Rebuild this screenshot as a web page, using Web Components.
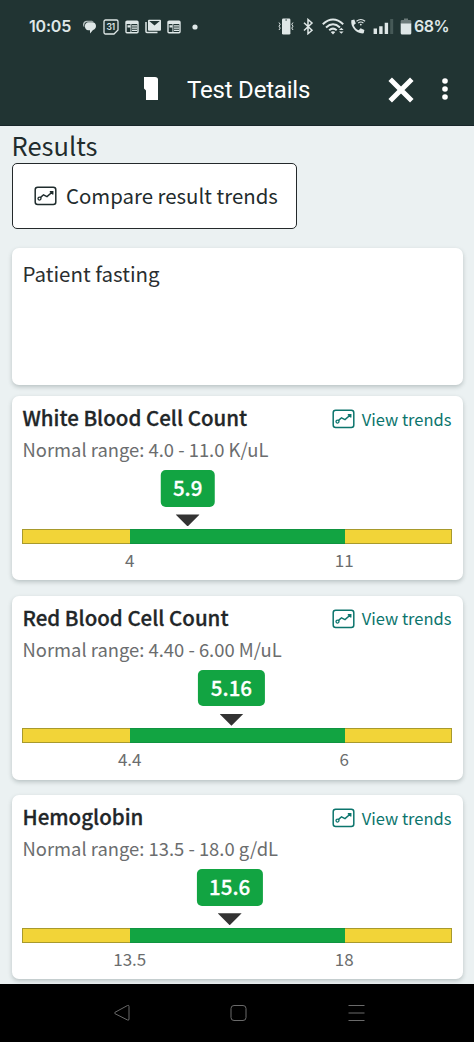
<!DOCTYPE html>
<html lang="en">
<head>
<meta charset="utf-8">
<title>Test Details</title>
<style>
    body {
        margin: 0;
        background-color: #ebf1f2;
        font-family: "Noto Sans CJK SC", "Noto Sans", sans-serif;
        color: #1f2c2d;
    }

    .screen {
        display: flex;
        flex-direction: column;
        height: 1042px;
        overflow: hidden;
    }
</style>
</head>
<body>
<div class="screen">
    <status-bar time="10:05" battery="68%"></status-bar>
    <app-toolbar>Test Details</app-toolbar>
    <results-page heading="Results">
        <compare-button slot="action">Compare result trends</compare-button>
        <note-card>Patient fasting</note-card>
        <result-card name="White Blood Cell Count" range="4.0 - 11.0 K/uL" value="5.9" low="4" high="11" at="38.5"></result-card>
        <result-card name="Red Blood Cell Count" range="4.40 - 6.00 M/uL" value="5.16" low="4.4" high="6" at="48.7"></result-card>
        <result-card name="Hemoglobin" range="13.5 - 18.0 g/dL" value="15.6" low="13.5" high="18" at="48.3"></result-card>
    </results-page>
    <nav-bar></nav-bar>
</div>

<script>
class StatusBar extends HTMLElement {

    constructor() {
        super();
        this.shadowDOM = this.attachShadow({mode: "open"});
    }

    connectedCallback() {
        this.render();
    }

    render() {
        const news = `
            <svg width="14" height="14" viewBox="0 0 14 14">
                <rect x="1" y="1.2" width="12" height="11.6" rx="1" fill="none" stroke="currentColor" stroke-width="1.4"/>
                <path d="M1 1.500h12v2.500H1z" fill="currentColor"/>
                <path d="M2.500 5.200h3v2.200h-3zM7 5.200h5v1.400H7zM7 7.500h5v1.300H7zM7 9.800h5v1.300H7z" fill="currentColor"/>
                <path d="M5.900 4v8.500" stroke="currentColor" stroke-width=".9"/>
            </svg>`;
        this.shadowDOM.innerHTML = `
            <style>
                :host {
                    display: flex;
                    flex: none;
                    align-items: center;
                    justify-content: space-between;
                    box-sizing: border-box;
                    height: 53px;
                    padding: 0 25px 0 29px;
                    background-color: #213433;
                    color: #dfe7e7;
                    font: 600 16px/20px Inter, sans-serif;
                }

                .side {
                    display: flex;
                    align-items: center;
                }

                svg {
                    display: block;
                }

                .time {
                    width: 54px;
                    margin-top: -2px;
                    letter-spacing: -0.2px;
                }

                .percent {
                    margin: -1px 0 0 2px;
                    width: 35px;
                    letter-spacing: -0.5px;
                }
            </style>
            <div class="side">
                <span class="time">${this.getAttribute("time")}</span>
                <svg width="13" height="14" viewBox="0 0 13 14">
                    <path d="M4 .8h4c1.200 0 2 .4 2.600 1H4.800C2.600 1.800 1.300 3.200 1.300 5.300v2C.5 6.600 0 5.600 0 4.500 0 2.300 1.700.8 4 .8z" fill="currentColor" opacity=".8"/>
                    <path d="M5.300 2.300h4C11.500 2.300 13 3.900 13 6c0 2-1.300 3.500-3 4L7 13.600V10.200H5.300C3.300 10.200 1.900 8.400 1.900 6.200S3.300 2.300 5.300 2.300z" fill="currentColor"/>
                </svg>
                <svg style="margin-left: 7px" width="16" height="16" viewBox="0 0 16 16">
                    <path d="M2.500 1h11A1.500 1.500 0 0 1 15 2.500V11l-4 4H2.500A1.500 1.500 0 0 1 1 13.500v-11A1.500 1.500 0 0 1 2.500 1z" fill="none" stroke="currentColor" stroke-width="1.300"/>
                    <text x="7.700" y="10.800" text-anchor="middle" font-family="Inter" font-size="8.500" font-weight="600" letter-spacing="-.2" fill="currentColor">31</text>
                </svg>
                <span style="margin-left: 6px">${news}</span>
                <svg style="margin-left: 6px" width="17" height="15" viewBox="0 0 17 15">
                    <path d="M1 3v9.500q0 1 1 1h10.500" fill="none" stroke="currentColor" stroke-width="1.500"/>
                    <path d="M4 .8h11q1 0 1 1v9q0 1-1 1H4q-1 0-1-1v-9q0-1 1-1z" fill="currentColor"/>
                    <path d="M4.200 2l5.300 4.600L14.800 2z" fill="#213433"/>
                </svg>
                <span style="margin-left: 5px">${news}</span>
                <svg style="margin-left: 11px" width="6" height="6" viewBox="0 0 6 6"><circle cx="3" cy="3" r="2.600" fill="currentColor"/></svg>
            </div>
            <div class="side">
                <svg width="16" height="17" viewBox="0 0 16 17">
                    <rect x="4" y=".5" width="8.400" height="16" rx="1.300" fill="currentColor"/>
                    <path d="M1 4.500l1.200 1.800L1 8.200l1.200 1.900L1 12M15 4.500l-1.200 1.800L15 8.200l-1.200 1.900L15 12" fill="none" stroke="currentColor" stroke-width="1"/>
                    <circle cx="8.100" cy="2" r=".7" fill="#213433"/>
                </svg>
                <svg style="margin-left: 9px" width="11" height="17" viewBox="0 0 11 17">
                    <path d="M1 4.700l8 7.500-4 3.500V1.500l4 3.500-8 7.500" fill="none" stroke="currentColor" stroke-width="1.500"/>
                </svg>
                <svg style="margin-left: 8px" width="23" height="17" viewBox="0 0 23 17">
                    <path d="M.8 6.200Q11 -3.300 21.200 6.200M4 9.400q7-6.300 14 0M7.200 12.300q3.800-3.300 7.500 0" fill="none" stroke="currentColor" stroke-width="2"/>
                    <path d="M8.700 14q2.300-1.500 4.600 0L11 16.500zM17 12l2.300-2.300 2.300 2.300zM17 13.500l2.300 2.300 2.300-2.300z" fill="currentColor"/>
                </svg>
                <svg style="margin-left: 5px" width="16" height="17" viewBox="0 0 16 17">
                    <path d="M1.300 2.300l3-.8 1.500 3.900-2 1.600c.8 2.600 2.400 4.300 4.900 5.300l1.900-2 3.800 1.700-.7 3.300c-6.800 1-13.300-5.800-12.400-13z" fill="currentColor"/>
                    <path d="M6.500 3.200q4.300-3.400 8.600 0M8.200 5q2.600-2 5.200 0" fill="none" stroke="currentColor" stroke-width="1.100"/>
                    <circle cx="10.800" cy="6.600" r=".9" fill="currentColor"/>
                </svg>
                <svg style="margin-left: 7px" width="21" height="17" viewBox="0 0 21 17">
                    <path d="M.6 10.500H4V16H.6zM6.200 8.300h3.400V16H6.200zM11.700 4.800h3.400V16h-3.400z" fill="currentColor"/>
                    <path d="M17.200 1h3v15h-3z" fill="#465957"/>
                </svg>
                <svg style="margin-left: 6px" width="12" height="17" viewBox="0 0 12 17">
                    <path d="M4 .5h4v1.400h2q1.300 0 1.300 1.300V6H.7V3.200Q.7 1.900 2 1.900h2z" fill="#6d7b7a"/>
                    <path d="M.7 5.500h10.600V15q0 1.500-1.500 1.500H2.200Q.7 16.500.7 15z" fill="currentColor"/>
                </svg>
                <span class="percent">${this.getAttribute("battery")}</span>
            </div>`;
    }
}

class AppToolbar extends HTMLElement {

    constructor() {
        super();
        this.shadowDOM = this.attachShadow({mode: "open"});
    }

    connectedCallback() {
        this.render();
    }

    render() {
        this.shadowDOM.innerHTML = `
            <style>
                :host {
                    display: flex;
                    flex: none;
                    align-items: center;
                    box-sizing: border-box;
                    height: 73px;
                    padding: 0 25px 0 143px;
                    background-color: #213433;
                    border-bottom: 1px solid #18262a;
                    color: #fff;
                }

                .title {
                    flex: 1;
                    margin-left: 28px;
                    font: 400 24px/30px Roboto, sans-serif;
                    letter-spacing: -0.2px;
                    padding-top: 2px;
                }

                svg {
                    flex: none;
                }
            </style>
            <svg width="16" height="24" viewBox="0 0 16 24"><path d="M1 0h11q3 0 3 2.500V23H3v-9.500l-2-2z" fill="#fff"/></svg>
            <div class="title"><slot></slot></div>
            <svg style="margin-top: 1px" width="26" height="26" viewBox="0 0 26 26"><path d="M2.200 2.200l21.600 21.600M23.800 2.200L2.200 23.800" stroke="#fff" stroke-width="5"/></svg>
            <svg style="margin-left: 27px" width="8" height="24" viewBox="0 0 8 24">
                <g fill="#fff"><circle cx="4" cy="4" r="2.800"/><circle cx="4" cy="12" r="2.800"/><circle cx="4" cy="20" r="2.800"/></g>
            </svg>`;
    }
}

class TrendIcon extends HTMLElement {

    constructor() {
        super();
        this.shadowDOM = this.attachShadow({mode: "open"});
    }

    connectedCallback() {
        this.shadowDOM.innerHTML = `
            <style>
                :host {
                    display: block;
                    flex: none;
                    width: 23px;
                    height: 20px;
                }

                svg {
                    display: block;
                }
            </style>
            <svg width="23" height="20" viewBox="0 0 23 20" fill="none" stroke="currentColor">
                <rect x="1.200" y="1.200" width="20.600" height="17.300" rx="2.500" stroke-width="1.500"/>
                <circle cx="5.500" cy="12.600" r="1.500" stroke-width="1.300"/>
                <path d="M6.600 11.400l2.900-2.600 3.500 1.800L18.300 6M15.800 5.700h2.900v2.900" stroke-width="1.500"/>
            </svg>`;
    }
}

class ResultsPage extends HTMLElement {

    constructor() {
        super();
        this.shadowDOM = this.attachShadow({mode: "open"});
    }

    connectedCallback() {
        this.shadowDOM.innerHTML = `
            <style>
                :host {
                    display: block;
                    flex: none;
                    box-sizing: border-box;
                    height: 858px;
                    padding: 0 11.500px;
                    overflow: hidden;
                    background-color: #ebf1f2;
                }

                h1 {
                    margin: 0;
                    height: 37px;
                    font-size: 25.500px;
                    font-weight: 400;
                    line-height: 37px;
                }

                .cards {
                    display: flex;
                    flex-direction: column;
                    gap: 15.400px;
                    margin-top: 19px;
                }
            </style>
            <h1>${this.getAttribute("heading")}</h1>
            <slot name="action"></slot>
            <div class="cards"><slot></slot></div>`;
    }
}

class CompareButton extends HTMLElement {

    constructor() {
        super();
        this.shadowDOM = this.attachShadow({mode: "open"});
    }

    connectedCallback() {
        this.shadowDOM.innerHTML = `
            <style>
                :host {
                    display: flex;
                    align-items: center;
                    box-sizing: border-box;
                    width: 285.500px;
                    height: 66px;
                    padding-left: 21.500px;
                    border: 1.500px solid #24292b;
                    border-radius: 5px;
                    background-color: #fff;
                    font-size: 20.400px;
                    line-height: 30px;
                }

                span {
                    margin: -2px 0 0 9px;
                    white-space: nowrap;
                }
            </style>
            <trend-icon></trend-icon>
            <span><slot></slot></span>`;
    }
}

class NoteCard extends HTMLElement {

    constructor() {
        super();
        this.shadowDOM = this.attachShadow({mode: "open"});
    }

    connectedCallback() {
        this.shadowDOM.innerHTML = `
            <style>
                :host {
                    display: block;
                    box-sizing: border-box;
                    height: 137px;
                    margin-bottom: -4px;
                    padding: 10px 11px;
                    border-radius: 7px;
                    background-color: #fff;
                    box-shadow: 0 2px 4px rgba(40, 60, 60, 0.25);
                    font-size: 20.500px;
                    line-height: 30px;
                    color: #2a2e2f;
                }
            </style>
            <slot></slot>`;
    }
}

class ResultCard extends HTMLElement {

    constructor() {
        super();
        this.shadowDOM = this.attachShadow({mode: "open"});
    }

    connectedCallback() {
        this.render();
    }

    render() {
        this.shadowDOM.innerHTML = `
            <style>
                :host {
                    display: block;
                    box-sizing: border-box;
                    height: 184px;
                    padding: 6px 11px 0;
                    border-radius: 7px;
                    background-color: #fff;
                    box-shadow: 0 2px 4px rgba(40, 60, 60, 0.25);
                }

                .head {
                    display: flex;
                    justify-content: space-between;
                    height: 30px;
                    white-space: nowrap;
                }

                .name {
                    font-size: 20.500px;
                    font-weight: 500;
                    line-height: 30px;
                    color: #222628;
                    -webkit-text-stroke: 0.300px;
                }

                .link {
                    display: flex;
                    align-items: center;
                    gap: 6.500px;
                    padding-top: 4px;
                    color: #0c756d;
                    font-size: 16.500px;
                    line-height: 30px;
                }

                .link span {
                    margin-top: -1px;
                }

                .range {
                    margin-top: 2px;
                    font-size: 18.400px;
                    line-height: 30px;
                    color: #6b6d6e;
                    white-space: nowrap;
                }

                .marker {
                    display: flex;
                    flex-direction: column;
                    align-items: center;
                    width: max-content;
                    margin-top: 6px;
                    margin-left: ${this.getAttribute("at")}%;
                    transform: translateX(-50%);
                }

                .value {
                    height: 36.500px;
                    padding: 0 12.500px;
                    border-radius: 5px;
                    background-color: #12a442;
                    color: #fff;
                    font-size: 20.500px;
                    font-weight: 500;
                    line-height: 35px;
                    -webkit-text-stroke: 0.300px;
                }

                .arrow {
                    width: 24px;
                    height: 12px;
                    margin-top: 7.500px;
                    background-color: #333;
                    clip-path: polygon(0 0, 100% 0, 50% 100%);
                }

                .bar {
                    display: grid;
                    grid-template-columns: 1fr 2fr 1fr;
                    height: 15px;
                    margin: 2.500px -0.500px 0;
                }

                .edge {
                    background-color: #f2d438;
                    border: 1px solid #a89a2c;
                }

                .edge:first-child {
                    border-right: 0;
                }

                .edge:last-child {
                    border-left: 0;
                }

                .normal {
                    background-color: #12a442;
                    border: solid #0f9340;
                    border-width: 1px 0;
                }

                .limits {
                    display: grid;
                    grid-template-columns: 1fr 1fr;
                    margin-top: 2px;
                    text-align: center;
                    font-size: 17px;
                    line-height: 28px;
                    color: #6b6d6e;
                }
            </style>
            <div class="head">
                <div class="name">${this.getAttribute("name")}</div>
                <div class="link"><trend-icon></trend-icon><span>View trends</span></div>
            </div>
            <div class="range">Normal range: ${this.getAttribute("range")}</div>
            <div class="marker">
                <div class="value">${this.getAttribute("value")}</div>
                <div class="arrow"></div>
            </div>
            <div class="bar"><div class="edge"></div><div class="normal"></div><div class="edge"></div></div>
            <div class="limits"><span>${this.getAttribute("low")}</span><span>${this.getAttribute("high")}</span></div>`;
    }
}

class NavBar extends HTMLElement {

    constructor() {
        super();
        this.shadowDOM = this.attachShadow({mode: "open"});
    }

    connectedCallback() {
        this.shadowDOM.innerHTML = `
            <style>
                :host {
                    display: flex;
                    flex: none;
                    align-items: center;
                    justify-content: space-between;
                    box-sizing: border-box;
                    height: 58px;
                    padding: 0 109.500px 0 113px;
                    background-color: #000;
                }

                svg {
                    fill: none;
                    stroke: #6a6a6a;
                    stroke-width: 1;
                }
            </style>
            <svg width="17" height="18" viewBox="0 0 17 18"><path d="M14.500 1.500Q16 .8 16 2.500V15q0 1.700-1.500 1L2 9.700q-1.300-.7 0-1.400z"/></svg>
            <svg width="17" height="18" viewBox="0 0 17 18"><rect x="1" y="1.500" width="15" height="15" rx="3"/></svg>
            <svg width="17" height="18" viewBox="0 0 17 18"><path d="M.5 1.500h16M.5 9h16M.5 16.500h16"/></svg>`;
    }
}

customElements.define("status-bar", StatusBar);
customElements.define("app-toolbar", AppToolbar);
customElements.define("trend-icon", TrendIcon);
customElements.define("results-page", ResultsPage);
customElements.define("compare-button", CompareButton);
customElements.define("note-card", NoteCard);
customElements.define("result-card", ResultCard);
customElements.define("nav-bar", NavBar);
</script>
</body>
</html>
